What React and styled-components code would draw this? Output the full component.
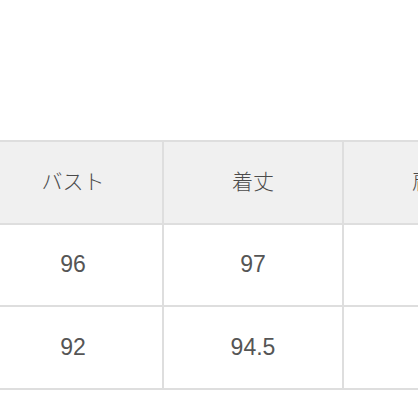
import React from 'react';
import styled, {createGlobalStyle} from 'styled-components';

const GlobalStyle = createGlobalStyle`
    html, body {
        margin: 0;
        background: #fff;
        overflow: hidden;
    }
`;

const rows = [
    {head: true, cells: ['バスト', '着丈', '肩幅']},
    {cells: ['96', '97', '']},
    {cells: ['92', '94.5', '']},
];

const App = () => {
    return (
        <Page>
            <GlobalStyle />
            <SizeTable>
                {rows.map((row, i) =>
                    row.cells.map((c, j) => (
                        <Cell key={i + '-' + j} head={row.head ? 1 : 0}>{c}</Cell>
                    ))
                )}
            </SizeTable>
        </Page>
    )
};

const Page = styled.div`
    width: 418px;
    height: 418px;
    padding-top: 140px;
    box-sizing: border-box;
    overflow: hidden;
`;

const SizeTable = styled.div`
    display: grid;
    grid-template-columns: repeat(3, 180px);
    grid-auto-rows: 82.5px;
    margin-left: -16px;
    width: 540px;
    border-top: 2px solid #dedede;
`;

const Cell = styled.div`
    display: flex;
    align-items: center;
    justify-content: center;
    box-sizing: border-box;
    border-right: 2px solid #dedede;
    border-bottom: 2px solid #dedede;
    background: ${p => p.head ? '#f0f0f0' : '#fff'};
    color: ${p => p.head ? '#4a4a4a' : '#555'};
    font-family: ${p => p.head ? '"Noto Sans CJK JP", sans-serif' : '"Liberation Sans", Arial, sans-serif'};
    font-size: ${p => p.head ? '21px' : '23px'};
    font-weight: ${p => p.head ? 300 : 400};
    padding-bottom: ${p => p.head ? '4px' : '0'};
`;

export default App;
